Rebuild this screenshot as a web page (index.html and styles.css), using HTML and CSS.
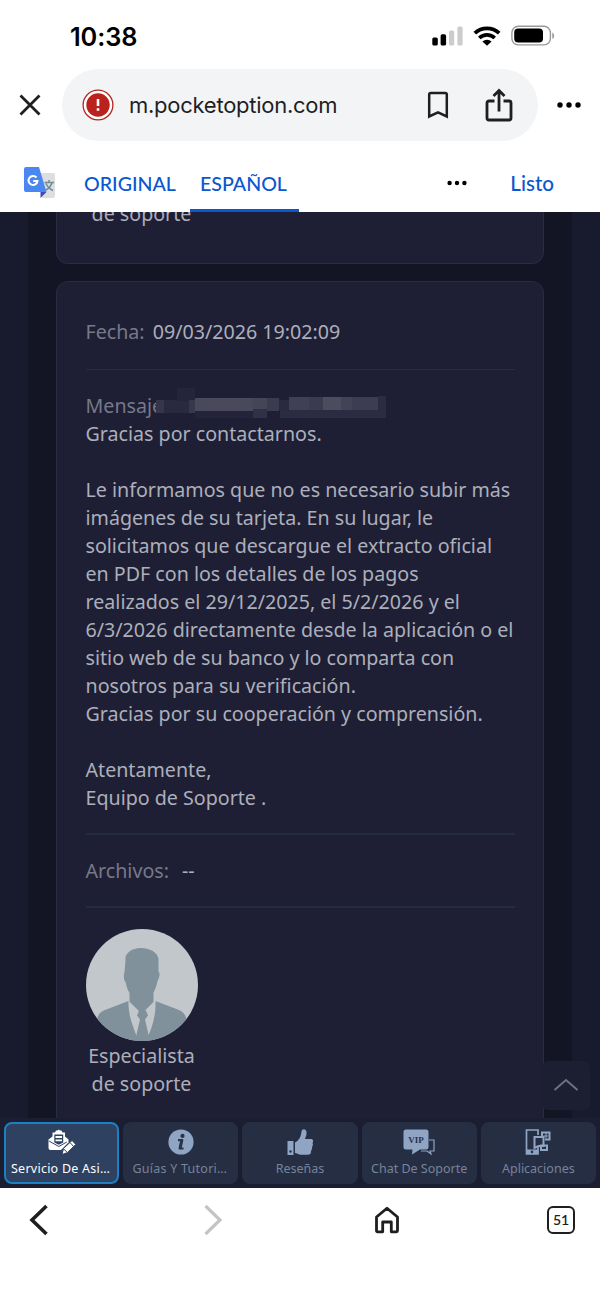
FILE: index.html
```
<!DOCTYPE html>
<html lang="es">
<head>
  <title>Pocket Option - Soporte</title>
  <meta charset="utf-8">
  <link rel="stylesheet" href="styles.css">
</head>
<body>
  <div class="statusbar">
    <span class="time">10:38</span>
    <svg class="signal" width="32" height="20" viewBox="0 0 32 20">
      <rect x="0.3" y="11.5" width="5.5" height="8" rx="1.6"/>
      <rect x="8.6" y="8.3" width="5.5" height="11.2" rx="1.6"/>
      <rect x="17" y="4.5" width="5.2" height="15" rx="1.6" fill="#ccc"/>
      <rect x="25.4" y="0.5" width="5.2" height="19" rx="1.6" fill="#ccc"/>
    </svg>
    <svg class="wifi" width="28" height="20" viewBox="0 0 28 20">
      <path d="M1.8 7.2a17.6 17.6 0 0 1 24.4 0M6.3 12a11.2 11.2 0 0 1 15.4 0" fill="none" stroke="#000" stroke-width="3.7"/>
      <path d="M14 19.8l-4.6-4.300a6.800 6.800 0 0 1 9.200 0z"/>
    </svg>
    <svg class="battery" width="45" height="22" viewBox="0 0 45 22">
      <rect x="0.9" y="1.3" width="38.5" height="18.6" rx="6.3" fill="none" stroke="#999" stroke-width="1.4"/>
      <rect x="3.2" y="3.6" width="28.8" height="14" rx="4"/>
      <path d="M41.3 7.4v6.5c2.5-1 2.5-5.5 0-6.5z" fill="#999"/>
    </svg>
  </div>

  <div class="addressbar">
    <svg class="close" width="24" height="24" viewBox="0 0 24 24"><path d="M2.5 2.5l19 19M21.5 2.5l-19 19" fill="none" stroke="#1f1f1f" stroke-width="2.8"/></svg>
    <div class="url">
      <svg class="warn" width="32" height="32" viewBox="0 0 32 32">
        <circle cx="16" cy="16" r="14.9" fill="#fff" stroke="#b3261e" stroke-width="1.3"/>
        <circle cx="16" cy="16" r="11.7" fill="#b9221d"/>
        <path d="M16 10v7M16 19.2v2.6" stroke="#fff" stroke-width="2.6"/>
      </svg>
      <span class="host">m.pocketoption.com</span>
      <svg class="bookmark" width="22" height="28" viewBox="0 0 22 28"><path d="M2.2 25.5V3.6a1.6 1.6 0 0 1 1.6-1.6h14.4a1.6 1.6 0 0 1 1.6 1.6v21.9L11 21.3z" fill="none" stroke="#1f1f1f" stroke-width="2.5"/></svg>
      <svg class="share" width="28" height="34" viewBox="0 0 28 34"><path d="M9.5 13H4a2 2 0 0 0-2 2v15a2 2 0 0 0 2 2h20a2 2 0 0 0 2-2V15a2 2 0 0 0-2-2h-5.500M14 23.500V3M8.500 8L14 2.500 19.500 8" fill="none" stroke="#1f1f1f" stroke-width="2.800"/></svg>
    </div>
    <svg class="more" width="26" height="6" viewBox="0 0 26 6"><circle cx="4" cy="3" r="2.7"/><circle cx="13" cy="3" r="2.7"/><circle cx="22" cy="3" r="2.7"/></svg>
  </div>

  <div class="translate">
    <svg class="gt" width="32" height="32" viewBox="0 0 32 32">
      <path d="M12 6h17a2 2 0 0 1 2 2v21a2 2 0 0 1-2 2H18z" fill="#dcdedf"/>
      <path d="M16.500 25h6l-6 6z" fill="#3b4bc0"/>
      <path d="M2 0h13l7.500 25H2a2 2 0 0 1-2-2V2a2 2 0 0 1 2-2z" fill="#4b87f0"/>
      <path d="M12.500 10.500A4.500 4.500 0 1 0 13.500 14H9.200" fill="none" stroke="#fff" stroke-width="2"/>
      <path d="M20.500 15.500h9.500M25 13v2.500M28 15.500c-.9 3.500-3.200 6-6 7.500M22 16.500c1.500 3.500 4 5.500 7 7" fill="none" stroke="#728b94" stroke-width="1.500"/>
    </svg>
    <span class="tab original">ORIGINAL</span>
    <span class="tab active">ESPAÑOL</span>
    <svg class="dots" width="20" height="6" viewBox="0 0 20 6"><circle cx="2.600" cy="3" r="2.200"/><circle cx="10" cy="3" r="2.200"/><circle cx="17.400" cy="3" r="2.200"/></svg>
    <span class="done">Listo</span>
  </div>

  <div class="page">
    <div class="column">
      <div class="card prev">
        <div class="agent">de soporte</div>
      </div>
      <div class="card message">
        <div class="row date"><span class="label">Fecha:</span> 09/03/2026 19:02:09</div>
        <div class="row body">
          <div class="to"><span class="label">Mensaje</span>
            <svg class="mosaic" width="234" height="32" viewBox="0 0 234 32" shape-rendering="crispEdges">
              <rect x="4" width="230" height="32" fill="#1e1f35"/>
              <rect x="2" y="12" width="8" height="13" fill="#35364a"/>
              <rect x="10" y="12" width="25" height="13" fill="#292a40"/>
              <rect x="23" y="0" width="18" height="13" fill="#24253b"/>
              <rect x="35" y="12" width="7" height="13" fill="#37384c"/>
              <rect x="41" y="10" width="58" height="13" fill="#49495b"/>
              <rect x="41" y="23" width="58" height="7" fill="#232439"/>
              <rect x="99" y="10" width="14" height="11" fill="#444557"/>
              <rect x="99" y="21" width="14" height="9" fill="#303146"/>
              <rect x="113" y="10" width="12" height="13" fill="#3a3b4f"/>
              <rect x="125" y="12" width="10" height="10" fill="#292a40"/>
              <rect x="126" y="22" width="106" height="8" fill="#2b2c41"/>
              <rect x="135" y="9" width="20" height="13" fill="#3f4054"/>
              <rect x="155" y="9" width="14" height="13" fill="#3a3b4f"/>
              <rect x="169" y="9" width="18" height="13" fill="#4b4c5e"/>
              <rect x="187" y="9" width="11" height="13" fill="#424357"/>
              <rect x="198" y="9" width="26" height="13" fill="#3c3d51"/>
              <rect x="224" y="8" width="8" height="22" fill="#2b2c41"/>
            </svg>
          </div>
          Gracias por contactarnos.<br>
          <br>
          Le informamos que no es necesario subir más<br>
          imágenes de su tarjeta. En su lugar, le<br>
          solicitamos que descargue el extracto oficial<br>
          en PDF con los detalles de los pagos<br>
          realizados el 29/12/2025, el 5/2/2026 y el<br>
          6/3/2026 directamente desde la aplicación o el<br>
          sitio web de su banco y lo comparta con<br>
          nosotros para su verificación.<br>
          Gracias por su cooperación y comprensión.<br>
          <br>
          Atentamente,<br>
          Equipo de Soporte .
        </div>
        <div class="row files"><span class="label">Archivos:</span> --</div>
        <div class="agent">
          <svg class="avatar" width="112" height="112" viewBox="0 0 112 112">
            <defs><clipPath id="round"><circle cx="56" cy="56" r="56"/></clipPath></defs>
            <g clip-path="url(#round)">
              <rect width="112" height="112" fill="#c2c7cb"/>
              <path d="M39.500 31c-1-6 5-10 9-11 9-3 23 1 24 10v13c2 0 1 6-1 9-1 6-3 9-4 12v9l-12 12-12-12v-9c-2-3-3-7-4-11-2-2-2-8-1-10z" fill="#80919b"/>
              <path d="M10 94c2-9 4-11 9-13l23.500-9L51 110h10l8.500-38 23.500 9c5 2 7 6 9 13v20H10z" fill="#80919b"/>
              <path d="M42.500 72L54 83l-3 24.500C46 96 42 84 42.500 72zM69.500 72L58 83l4 24.500c5-11 8-23 7.500-35.500z" fill="#c2c7cb"/>
              <path d="M53 81.500h7l2 5-3 4 4 17v6H50v-6l4-17-3-4z" fill="#80919b"/>
            </g>
          </svg>
          Especialista<br>de soporte
        </div>
      </div>
    </div>

    <div class="totop"><svg width="26" height="14" viewBox="0 0 26 14"><path d="M1.500 12L13 2l11.500 10" fill="none" stroke="#6c7182" stroke-width="2"/></svg></div>

    <div class="menu">
      <div class="item on">
        <svg width="28" height="26" viewBox="0 0 28 26">
          <path d="M4.500 7.500L.5 10.500V19a2 2 0 0 0 2 2H13l7.500-7.500v-3l-3.500-3z" fill="#fff"/>
          <path d="M4.500 14V3.500h2.500L8 1.500h1.500L10.700.5 12 1.500h1.500l1 2H17V14l-6 3.500z" fill="#fff"/>
          <path d="M6.300 5.500h8.900v8l-4.400 2.200-4.500-2.200z" fill="#2c4364"/>
          <path d="M7.500 8h6.500M7.500 11.300h6.500" stroke="#fff" stroke-width="1.800"/>
          <path d="M1 12l9.800 5.500 8-4.500" fill="none" stroke="#2c4364" stroke-width="1"/>
          <path d="M14 25.500l1.500-6 8.500-8 3.800 3.900-8.500 8.300z" fill="#fff" stroke="#2c4364" stroke-width="1"/>
          <path d="M22 13.500l3.700 4M15.800 20l3.200 3.200" stroke="#2c4364"/>
        </svg>
        <span class="wide">Servicio De Asi…</span>
      </div>
      <div class="item">
        <svg width="26" height="26" viewBox="0 0 26 26"><circle cx="13" cy="13" r="12.600" fill="#8fa5c3"/><circle cx="14.500" cy="6.900" r="2.100" fill="#29344a"/><path d="M10 11.200h3.800L12 19.500h3.500" fill="none" stroke="#29344a" stroke-width="2.200"/><path d="M14 10.500l-2 9" stroke="#29344a" stroke-width="3"/></svg>
        <span class="wide">Guías Y Tutori…</span>
      </div>
      <div class="item">
        <svg width="26" height="26" viewBox="0 0 26 26"><path d="M.5 12h6v14h-6z" fill="#8fa5c3"/><circle cx="3.500" cy="22.500" r="1.200" fill="#29344a"/><path d="M8 13.500c4-2 6-6 6.500-11C15-.5 19-.5 19.500 3c.3 3-1 5-1.500 7h6c2.500 0 2.500 3 1.500 4 1 1.500 0 3-.5 4 .5 1.500-.3 3-1 3.700.3 2.500-1 4-3 4h-7c-3 0-4-1.700-6-1.700z" fill="#8fa5c3"/></svg>
        <span>Reseñas</span>
      </div>
      <div class="item">
        <svg width="34" height="26" viewBox="0 0 34 26"><path d="M4 .5h20A2.500 2.500 0 0 1 26.500 3v15a2.500 2.500 0 0 1-2.500 2.500h-6l-8 5 .5-5H4A2.500 2.500 0 0 1 1.500 18V3A2.500 2.500 0 0 1 4 .5z" fill="#8fa5c3"/><path d="M27 11h5v11h-4l1 3-4-3h-6" fill="none" stroke="#8fa5c3" stroke-width="1.200"/><text x="14" y="14" class="vip" text-anchor="middle">VIP</text></svg>
        <span>Chat De Soporte</span>
      </div>
      <div class="item">
        <svg width="26" height="26" viewBox="0 0 26 26"><path d="M13 6V1H1.500v24H13v-8" fill="none" stroke="#8fa5c3" stroke-width="1.700"/><path d="M1 20.500h12V25H1z" fill="#8fa5c3"/><circle cx="7" cy="22.900" r="1.300" fill="#29344a"/><path d="M17 7V3.500h7.500v7H20M9.500 8h9v9h-5l-4 2zM16 16.500h6V21h-6z" fill="none" stroke="#8fa5c3" stroke-width="2"/><path d="M18.500 7h4.500M21 4v5" stroke="#8fa5c3"/></svg>
        <span>Aplicaciones</span>
      </div>
    </div>
  </div>

  <div class="bottombar">
    <svg width="20" height="32" viewBox="0 0 20 32"><path d="M17.500 2L3 16l14.500 14" fill="none" stroke="#1f1f1f" stroke-width="3.600"/></svg>
    <svg class="forward" width="20" height="32" viewBox="0 0 20 32"><path d="M2.500 2L17 16 2.500 30" fill="none" stroke="#c4c4c4" stroke-width="3.200"/></svg>
    <svg class="home" width="26" height="28" viewBox="0 0 26 28"><path d="M2.500 11L13 2.200 23.500 11v13.800a1 1 0 0 1-1 1h-5.200V16H8.700v9.800H3.500a1 1 0 0 1-1-1z" fill="none" stroke="#1f1f1f" stroke-width="2.800" stroke-linejoin="round"/></svg>
    <span class="tabs">51</span>
  </div>
</body>
</html>
```
FILE: styles.css
```
*{
  padding:0;
  margin:0;
  box-sizing: border-box;
}
body{
  width:600px;
  height:1298px;
  overflow: hidden;
  background-color: #fff;
  font-family: "Noto Sans", sans-serif;
}
svg{
  display: block;
  flex-shrink: 0;
}
.statusbar{
  display: flex;
  align-items: center;
  height:69px;
  padding:3px 44px 0 70px;
}
.time{
  flex:1;
  font:600 25.3px Inter, sans-serif;
  letter-spacing: -0.1px;
}
.wifi{
  margin:0 10px 0 9px;
}
.addressbar{
  display: flex;
  align-items: center;
  height:72px;
  padding:0 18px 0 18px;
}
.url{
  display: flex;
  align-items: center;
  width:476px;
  height:72px;
  margin:0 18px 0 20px;
  padding:0 25px 0 20px;
  border-radius: 36px;
  background-color: #f2f4f6;
}
.host{
  flex:1;
  margin-left:15px;
  font:400 22px Inter, sans-serif;
  letter-spacing: -0.26px;
  color:#1f1f1f;
}
.share{
  margin-left:36px;
}
.translate{
  display: flex;
  align-items: center;
  height:71px;
  padding:13px 46px 0 24px;
  font:500 19.6px Lato, sans-serif;
  color:#0b57d0;
}
.tab{
  height:58px;
  line-height: 59px;
}
.original{
  margin-left:28px;
}
.active{
  width:109px;
  margin-left:14px;
  padding-left:10px;
  border-bottom:3px solid #0b57d0;
}
.dots{
  margin-left:auto;
}
.done{
  margin-left:43px;
  font-size: 20.6px;
}
.page{
  position:relative;
  height:976px;
  padding:0 28px;
  overflow: hidden;
  background-color: #181b2e;
}
.column{
  height:976px;
  padding:0 28px;
  background-color: #131524;
}
.card{
  width:488px;
  padding:0 28px 0 28.5px;
  border:1px solid #2a2c40;
  border-radius: 12px;
  background-color: #1e1f35;
  font-size: 19.65px;
  line-height: 28px;
  color:#adafba;
  white-space: nowrap;
}
.prev{
  display: flow-root;
  height:52px;
  border-top:0;
  border-radius: 0 0 12px 12px;
}
.prev .agent{
  margin-top:-12px;
}
.message{
  height:950px;
  margin-top:17px;
  padding-top:36px;
}
.label{
  margin-right:3px;
  color:#777988;
}
.row{
  border-bottom:2px solid #252b42;
}
.date{
  padding-bottom:23px;
  border-bottom:1px solid #2a2c40;
}
.body{
  padding:22px 0 21px;
}
.to{
  position:relative;
}
.mosaic{
  position:absolute;
  left:68px;
  top:-4px;
}
.files{
  padding:22px 0 21px;
}
.files .label{
  margin-right:8px;
}
.agent{
  width:112px;
  text-align: center;
}
.avatar{
  margin-top:21px;
  margin-bottom:1px;
}
.totop{
  position:absolute;
  right:10px;
  bottom:78px;
  width:48px;
  height:49px;
  padding:17px 0 0 11px;
  border-radius: 6px;
  background-color: #1c1e31;
}
.menu{
  position:absolute;
  left:0;
  bottom:0;
  display: flex;
  gap:4px;
  width:600px;
  height:70px;
  padding:4px;
  background-color: #1b1d30;
}
.item{
  display: flex;
  flex-direction: column;
  align-items: center;
  width:115.2px;
  height:62px;
  padding-top:7px;
  border-radius: 8px;
  background-color: #262e43;
  font-size: 12.5px;
  line-height: 18px;
  color:#77839a;
  white-space: nowrap;
}
.item span{
  margin-top:5px;
}
.item .wide{
  margin-right:2px;
  letter-spacing: 0.25px;
}
.on{
  padding-top:5px;
  border:2px solid #1b80c4;
  background-color: #2e4161;
  color:#fff;
}
.vip{
  font:bold 9px "Liberation Serif", serif;
  fill:#29344a;
}
.bottombar{
  display: flex;
  align-items: center;
  height:63px;
  padding:0 25px 0 29px;
}
.forward{
  margin-left:154px;
}
.home{
  margin-left:151px;
}
.tabs{
  width:28px;
  height:28px;
  margin-left:auto;
  border:2.5px solid #1f1f1f;
  border-radius: 6px;
  font:600 14px/23px Lato, sans-serif;
  text-align: center;
  color:#1f1f1f;
}
```
